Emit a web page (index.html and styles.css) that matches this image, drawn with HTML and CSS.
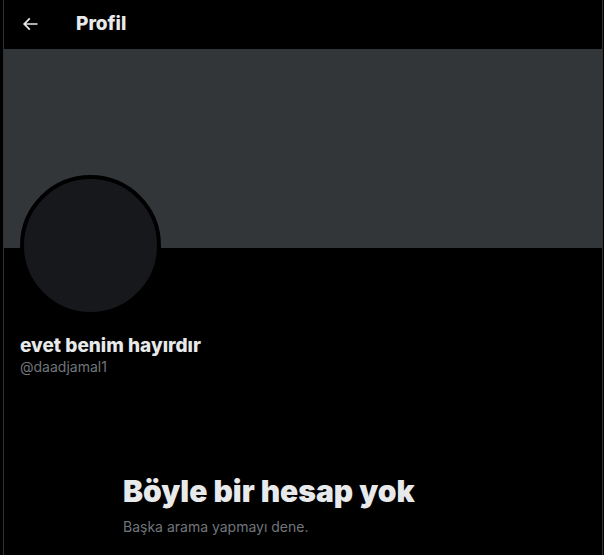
FILE: index.html
```html
<!DOCTYPE html>
<html lang="tr">
<head>
  <meta charset="UTF-8" />
  <meta name="viewport" content="width=device-width, initial-scale=1.0"/>
  <title>Profil</title>
  <link rel="stylesheet" href="styles.css">
</head>
<body>
  <main class="column">
    <header class="topbar">
      <button class="back" type="button" aria-label="Geri">
        <svg viewBox="0 0 24 24" aria-hidden="true">
          <path d="M7.414 13l5.043 5.04-1.414 1.42L3.586 12l7.457-7.46 1.414 1.42L7.414 11H21v2H7.414z"/>
        </svg>
      </button>
      <h1>Profil</h1>
    </header>

    <div class="banner"></div>

    <section class="profile">
      <div class="avatar"></div>
      <h2 class="name">evet benim hayırdır</h2>
      <p class="handle">@daadjamal1</p>
    </section>

    <section class="empty">
      <h2>Böyle bir hesap yok</h2>
      <p>Başka arama yapmayı dene.</p>
    </section>
  </main>
</body>
</html>
```
FILE: styles.css
```css
* {
  box-sizing: border-box;
}

body {
  margin: 0;
  padding: 0 1px 0 3px;
  background: #000;
  color: #e7e9ea;
  font-family: Inter, "Liberation Sans", sans-serif;
  font-size: 14px;
  line-height: 20px;
}

h1, h2, p {
  margin: 0;
}

.column {
  min-height: 100vh;
  border-left: 1px solid #2f3336;
  border-right: 1px solid #2f3336;
}

.topbar {
  display: flex;
  align-items: center;
  height: 49px;
  padding: 0 16px 2px;
}

.back {
  display: flex;
  width: 56px;
  padding: 0;
  border: none;
  background: none;
  cursor: pointer;
}

.back svg {
  width: 20px;
  height: 20px;
  fill: #e7e9ea;
}

.topbar h1 {
  font-size: 19px;
  font-weight: 800;
  line-height: 24px;
}

.banner {
  aspect-ratio: 3 / 1;
  background: #333639;
}

.profile {
  padding: 0 16px;
}

/* avatar overlaps the banner */
.avatar {
  position: relative;
  width: 141px;
  height: 141px;
  margin-top: -73px;
  margin-bottom: 19px;
  border: 4px solid #000;
  border-radius: 50%;
  background: #16181c;
}

.name {
  font-size: 19px;
  font-weight: 800;
  line-height: 22px;
}

.handle {
  color: #71767b;
}

.empty {
  width: 360px;
  max-width: 100%;
  margin: 96px auto 0;
}

.empty h2 {
  margin-bottom: 8px;
  font-size: 30px;
  font-weight: 900;
  line-height: 36px;
}

.empty p {
  color: #71767b;
}
```
